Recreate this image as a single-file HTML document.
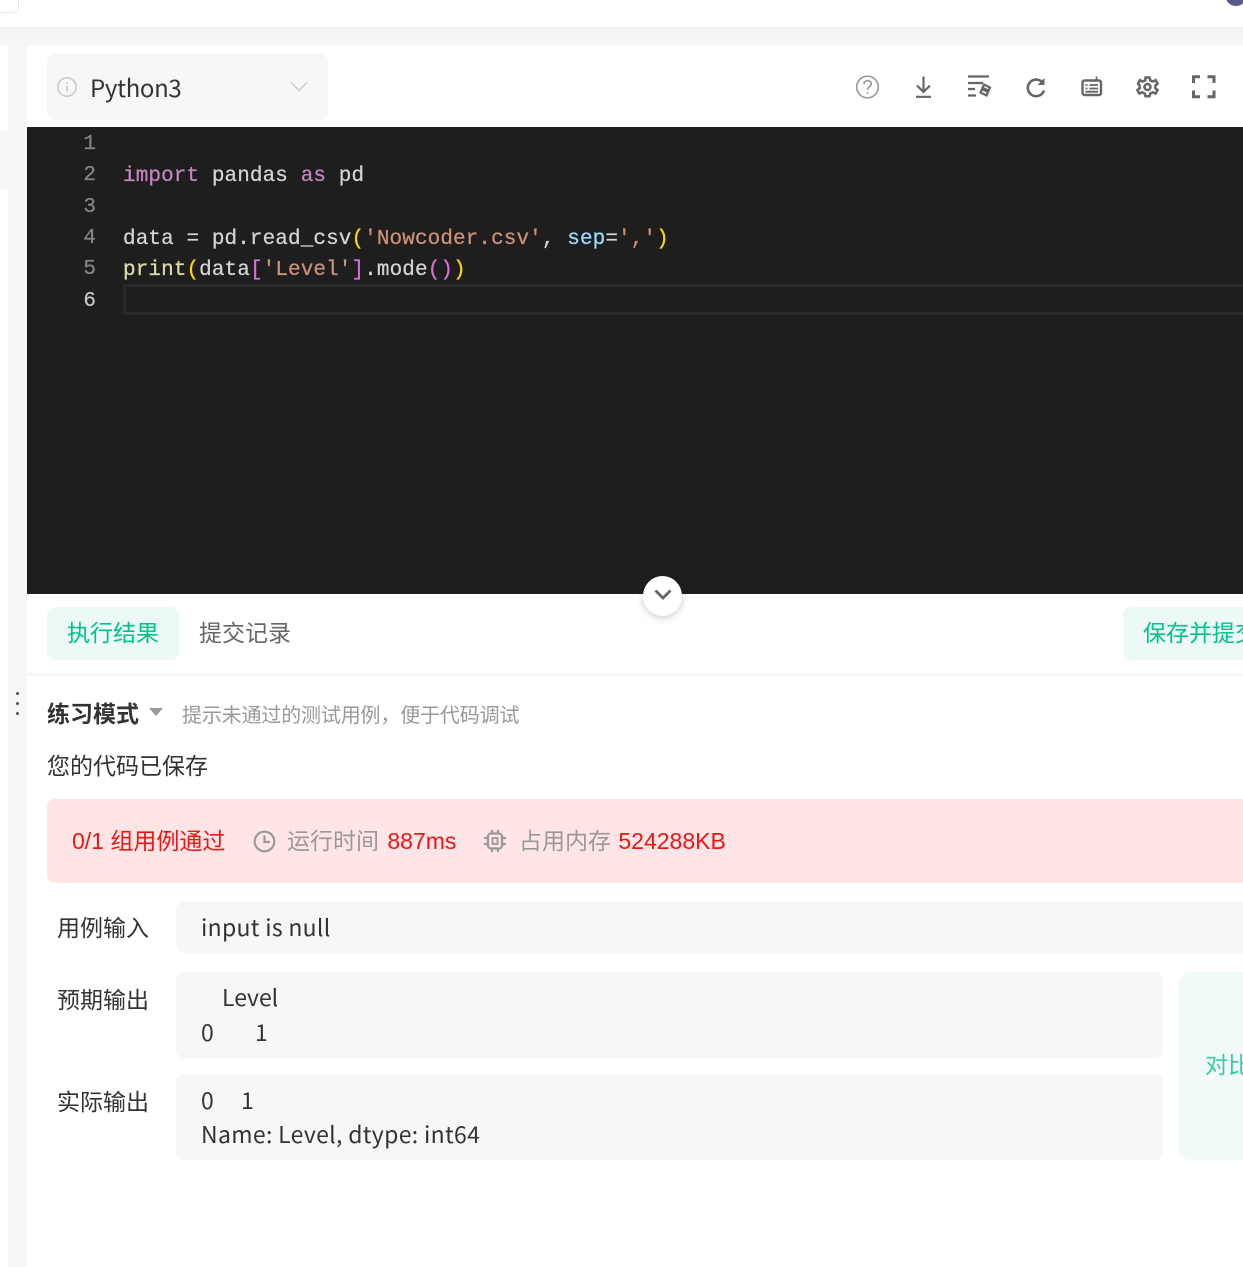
<!DOCTYPE html>
<html><head><meta charset="utf-8"><style>
html,body{margin:0;padding:0;width:1243px;height:1267px;overflow:hidden;background:#fff}
body{position:relative;font-family:"Noto Sans CJK SC","Liberation Sans",sans-serif;color:#333}
.a{position:absolute;white-space:pre}
.box{position:absolute;border-radius:8px}
.code{position:absolute;left:123px;font:21px/31px "Liberation Mono",monospace;letter-spacing:.09px;color:#d4d4d4;white-space:pre;-webkit-text-stroke:.25px currentColor}
.ln{position:absolute;left:70px;width:26px;text-align:right;font:21px/31px "Liberation Mono",monospace;color:#858585;-webkit-text-stroke:.25px currentColor}
.k{color:#c586c0}.s{color:#ce9178}.y{color:#ffd700}.p{color:#da70d6}.v{color:#9cdcfe}.f{color:#dcdcaa}
.t{font-size:23px;line-height:34px}
.l{font-family:"Liberation Sans","Noto Sans CJK SC",sans-serif}
svg{position:absolute;overflow:visible}
</style></head><body>
<div class="box" style="left:0;top:27px;width:1243px;height:1240px;background:#f6f7f9;border-radius:0"></div>
<div class="box" style="left:0;top:0;width:1243px;height:27px;background:#fff;border-radius:0"></div>
<div class="box" style="left:0;top:27px;width:1243px;height:19px;background:linear-gradient(#f0f1f3,#f6f7f9);border-radius:0"></div>
<div class="box" style="left:-10px;top:-10px;width:27px;height:21px;background:#fff;border:1px solid #e4e5e9;border-radius:5px"></div>
<div class="box" style="left:1226px;top:-12px;width:20px;height:18px;background:#5a5a8a;border-radius:50%"></div>
<div class="box" style="left:0;top:46px;width:8px;height:84px;background:#fff;border-radius:0"></div>
<div class="box" style="left:0;top:190px;width:8px;height:1077px;background:#fff;border-radius:0"></div>
<div class="box" style="left:27px;top:46px;width:1216px;height:1221px;background:#fff;border-radius:0"></div>

<div class="box" style="left:47px;top:54px;width:281px;height:66px;background:#f7f7f8"></div>
<svg style="left:57px;top:77px" width="20" height="20" viewBox="0 0 20 20" fill="none" stroke="#c9cdd4" stroke-width="1.7"><circle cx="10" cy="10" r="9.2"/><path d="M10 8.500v6M10 5.200v1.600"/></svg>
<div class="a" style="left:90px;top:69px;font-size:24px;line-height:36px;letter-spacing:-.35px;color:#333">Python3</div>
<svg style="left:290px;top:81px" width="18" height="12" viewBox="0 0 18 12" fill="none" stroke="#c9cdd4" stroke-width="1.500"><path d="M1 1.500l8 8 8-8"/></svg>

<svg style="left:856px;top:75px" width="24" height="24" viewBox="0 0 24 24" fill="none" stroke="#999" stroke-width="1.600"><circle cx="11.500" cy="12" r="10.800"/><path d="M8 9.200c0-5 7.500-4.600 7.300-.3 0 3-3.800 2.600-3.800 6"/><path d="M11.500 17v1.600"/></svg>
<svg style="left:912px;top:75px" width="24" height="24" viewBox="0 0 24 24" fill="none" stroke="#666" stroke-width="2.200"><path d="M11.500 1.500v15M5 10.500l6.500 6.500 6.500-6.500M4 21.800h15"/></svg>
<svg style="left:967px;top:75px" width="24" height="24" viewBox="0 0 24 24" fill="none" stroke="#666" stroke-width="2.200"><path d="M1 1.500h21M1 8h15M1 14h7M1 20.500h8"/><path d="M17 9.500l6 3-3.500 8-6-3z" fill="#fff"/><path d="M15.500 13.500l6 3" stroke-width="3.500"/></svg>
<svg style="left:1024px;top:75px" width="24" height="24" viewBox="0 0 24 24" fill="none" stroke="#666" stroke-width="2.600"><path d="M18.500 7.500A8.300 8.300 0 1 0 20 15.500"/><path d="M20.500 3v7h-7z" fill="#666" stroke="none"/></svg>
<svg style="left:1080px;top:75px" width="24" height="24" viewBox="0 0 24 24" fill="none" stroke="#666" stroke-width="2.400"><rect x="2.500" y="5.500" width="18.500" height="14.500" rx="2"/><path d="M16.500 1.500v4" stroke-width="1.700"/><path d="M5.500 10h2M9.500 10h8.500M5.500 13.500h2M9.500 13.500h8.500M5.500 16.700h12.500" stroke-width="1.800"/></svg>
<svg style="left:1136px;top:75px" width="24" height="24" viewBox="0 0 24 24" fill="none" stroke="#666" stroke-width="2.500"><path d="M9.500 2.500h4l.8 2.800 2.700 1.200 2.600-1.300 2 3.500-2.200 1.800v2.800l2.200 1.800-2 3.500-2.600-1.300-2.700 1.200-.8 2.800h-4l-.8-2.800-2.700-1.200-2.600 1.300-2-3.500 2.200-1.800V10.500L2 8.700l2-3.500 2.600 1.300 2.700-1.200z"/><circle cx="11.500" cy="12" r="3"/></svg>
<svg style="left:1192px;top:75px" width="24" height="24" viewBox="0 0 24 24" fill="none" stroke="#666" stroke-width="3"><path d="M1.500 8V1.800h6.500M15.500 1.800H22V8M1.500 15.500v6.300h6.500M15.500 21.800H22v-6.300"/></svg>

<div class="box" style="left:27px;top:127px;width:1216px;height:467px;background:#1e1e1e;border-radius:0"></div>
<div class="box" style="left:123px;top:284px;width:1120px;height:31px;box-sizing:border-box;border:3px solid #282828;border-right:0;border-radius:0"></div>
<div class="ln" style="top:129px">1</div>
<div class="ln" style="top:160px">2</div>
<div class="ln" style="top:192px">3</div>
<div class="ln" style="top:223px">4</div>
<div class="ln" style="top:254px">5</div>
<div class="ln" style="top:286px;color:#c6c6c6">6</div>
<div class="code" style="top:161px"><span class="k">import</span> pandas <span class="k">as</span> pd</div>
<div class="code" style="top:224px">data = pd.read_csv<span class="y">(</span><span class="s">'Nowcoder.csv'</span>, <span class="v">sep</span>=<span class="s">','</span><span class="y">)</span></div>
<div class="code" style="top:255px"><span class="f">print</span><span class="y">(</span>data<span class="p">[</span><span class="s">'Level'</span><span class="p">]</span>.mode<span class="p">()</span><span class="y">)</span></div>

<div class="box" style="left:643px;top:576px;width:39px;height:40px;background:#fff;border-radius:50%;box-shadow:0 2px 8px rgba(0,0,0,.2)"></div>
<svg style="left:654px;top:589px" width="18" height="12" viewBox="0 0 18 12" fill="none" stroke="#666" stroke-width="2.800"><path d="M1.500 1.500l7.500 7.500 7.500-7.500"/></svg>

<div class="box" style="left:47px;top:607px;width:132px;height:53px;background:#edf9f6"></div>
<div class="a t" style="left:67px;top:614px;color:#00c389">执行结果</div>
<div class="a t" style="left:199px;top:614px;color:#666">提交记录</div>
<div class="box" style="left:1123px;top:607px;width:140px;height:53px;background:#edf9f6"></div>
<div class="a t" style="left:1143px;top:614px;color:#00c389">保存并提交</div>
<div class="box" style="left:27px;top:673px;width:1216px;height:3px;background:#f7f7f7;border-radius:0"></div>

<div class="box" style="left:16px;top:692px;width:3px;height:3px;background:#555;border-radius:50%"></div>
<div class="box" style="left:16px;top:702px;width:3px;height:3px;background:#555;border-radius:50%"></div>
<div class="box" style="left:16px;top:712px;width:3px;height:3px;background:#555;border-radius:50%"></div>

<div class="a t" style="left:47px;top:695px;font-weight:700;color:#333">练习模式</div>
<svg style="left:149px;top:708px" width="14" height="8"><path d="M0 0h14L7 8z" fill="#999"/></svg>
<div class="a" style="left:182px;top:699px;font-size:20px;line-height:30px;letter-spacing:-.16px;color:#999">提示未通过的测试用例，便于代码调试</div>
<div class="a t" style="left:47px;top:747px;color:#333">您的代码已保存</div>

<div class="box" style="left:47px;top:799px;width:1196px;height:84px;background:#ffe5e5;border-radius:8px 0 0 8px"></div>
<div class="a t l" style="left:72px;top:824px;color:#f01414">0/1 组用例通过</div>
<svg style="left:253px;top:830px" width="23" height="23" viewBox="0 0 23 23" fill="none" stroke="#999" stroke-width="2.200"><circle cx="11.500" cy="11.500" r="9.800"/><path d="M11.500 5.500v6.500h5.500"/></svg>
<div class="a t l" style="left:287px;top:824px;color:#999;word-spacing:2px">运行时间 <span style="color:#f01414">887ms</span></div>
<svg style="left:483px;top:829px" width="24" height="24" viewBox="0 0 24 24" fill="none" stroke="#999" stroke-width="2.200"><rect x="5" y="4.500" width="14" height="15" rx="3"/><rect x="9.500" y="9" width="5" height="6" stroke-width="1.800"/><path d="M9 1v3.500M15 1v3.500M9 19.500V23M15 19.500V23M1 9h4M1 15h4M19 9h4M19 15h4"/></svg>
<div class="a t l" style="left:519px;top:824px;color:#999;word-spacing:1px">占用内存 <span style="color:#f01414">524288KB</span></div>

<div class="a t" style="left:57px;top:909px">用例输入</div>
<div class="box" style="left:176px;top:902px;width:1067px;height:51px;background:#f7f7f7;border-radius:8px 0 0 8px"></div>
<div class="a t" style="left:201px;top:909px;letter-spacing:.3px">input is null</div>

<div class="a t" style="left:57px;top:981px">预期输出</div>
<div class="box" style="left:176px;top:972px;width:987px;height:86px;background:#f7f7f7"></div>
<div class="a t" style="left:222px;top:979px">Level</div>
<div class="a t" style="left:201px;top:1014px">0</div>
<div class="a t" style="left:255px;top:1014px">1</div>

<div class="a t" style="left:57px;top:1083px">实际输出</div>
<div class="box" style="left:176px;top:1074px;width:987px;height:86px;background:#f7f7f7"></div>
<div class="a t" style="left:201px;top:1082px">0</div>
<div class="a t" style="left:241px;top:1082px">1</div>
<div class="a t" style="left:201px;top:1116px;letter-spacing:.33px">Name: Level, dtype: int64</div>

<div class="box" style="left:1179px;top:972px;width:84px;height:188px;background:#f2faf9;border-radius:12px"></div>
<div class="a t" style="left:1205px;top:1046px;color:#33cfa1">对比</div>
</body></html>
